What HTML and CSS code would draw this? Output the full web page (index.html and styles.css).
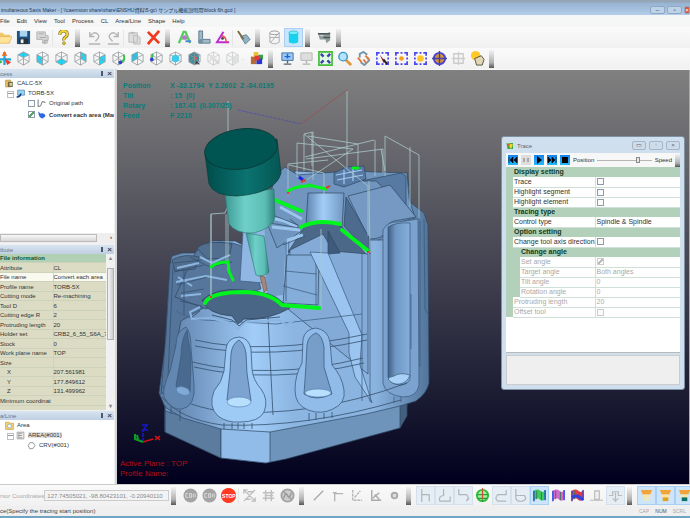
FILE: index.html
```html
<!DOCTYPE html>
<html lang="en">
<head>
<meta charset="utf-8">
<title>Simultaneous 5axis Maker</title>
<link rel="stylesheet" href="styles.css">
</head>
<body>
<svg class="defs" aria-hidden="true">
  <symbol id="cube" viewBox="0 0 16 16"><path d="M8 1l6 3v7.500l-6 3.500-6-3.500V4zM2 4l6 3 6-3M8 7v8M8 1v7l-6 3.500M8 8l6 3.500" fill="none" stroke="#92979b" stroke-width=".8"/></symbol>
  <symbol id="region" viewBox="0 0 16 16"><path d="M2 5V2h3M7 2h2M11 2h3v3M14 7v2M14 11v3h-3M9 14H7M5 14H2v-3M2 9V7" fill="none" stroke="#4a45ee" stroke-width="1.800"/></symbol>
  <symbol id="monitor" viewBox="0 0 16 16"><path d="M2 2h12v8H2z" fill="#9cc8f4" stroke="#3d6fa5"/><path d="M8 10v3M4 14h8" stroke="#567" stroke-width="1.500"/></symbol>
  <symbol id="disc" viewBox="0 0 16 16"><circle cx="8" cy="8" r="7.500" fill="#a4a4a4"/><path d="M3 6h2.500M3 6v4h2.500M7 6v4h2V6zM11 6v4M13 6v4" fill="none" stroke="#ddd" stroke-width="1"/></symbol>
  <symbol id="surface" viewBox="0 0 16 16"><path d="M2 3q4-3 7 0t5-1v10q-3 3-6 0t-6 2z" fill="currentColor"/><path d="M2 3v11M14 2v11" stroke="#2944d8" stroke-width="1.500"/><path d="M5 3v9M10 4v9" stroke="#3a7a50"/></symbol>
  <symbol id="bit" viewBox="0 0 16 16"><path d="M2 2h12l-2 5H4z" fill="#f2a33c"/><path d="M4 7h8v3H4z" fill="#ffe3a0"/><path d="M5 10h6v4H5z" fill="currentColor"/></symbol>
</svg>

<header class="titlebar">
  <h1>imultaneous 5axis Maker - [ \\caemsion share\share\ENSHU資料\5-gc\ サンプル機能説明用\block 6h.gcd ]</h1>
  <div class="winbuttons"><button aria-label="Minimize">–</button><button aria-label="Restore">▫</button><button class="close" aria-label="Close">×</button></div>
</header>

<nav class="menubar">
  <a href="#">File</a><a href="#">Edit</a><a href="#">View</a><a href="#">Tool</a><a href="#">Process</a><a href="#">CL</a><a href="#">Area/Line</a><a href="#">Shape</a><a href="#">Help</a>
</nav>

<div class="toolbar">
  <button aria-label="Open"><svg viewBox="0 0 16 16"><path d="M0 3h6l2 2h6v9H0z" fill="#f2c866"/><path d="M3 7h13l-3 7H0z" fill="#ffe39b" stroke="#dca944" stroke-width=".6"/></svg></button>
  <button aria-label="Save"><svg viewBox="0 0 16 16"><path d="M1 1h14v14H1z" fill="#1d5382"/><path d="M4 1h8v6H4z" fill="#a9d4f0"/><path d="M3 9h10v6H3z" fill="#26333e"/><path d="M5 10h3v4H5z" fill="#e8eef2"/></svg></button>
  <button aria-label="Print"><svg viewBox="0 0 16 16"><path d="M2 2h9v4h3v5h-3v3H8v-4H2z" fill="#d6d6d6" stroke="#b2b2b2"/><path d="M4 4h5M5 8h7M10 11h3v3h-3z" stroke="#aaa" fill="none"/></svg></button>
  <i class="sep"></i>
  <button aria-label="Help"><svg viewBox="0 0 16 16"><path d="M4 5q0-4 4-4t4 3.500q0 2-2 3.200T8.500 11" fill="none" stroke="#83702a" stroke-width="3.400"/><path d="M4 5q0-4 4-4t4 3.500q0 2-2 3.200T8.500 11" fill="none" stroke="#f3d436" stroke-width="2"/><circle cx="8.500" cy="14" r="1.600" fill="#e6c52c" stroke="#83702a" stroke-width=".6"/></svg></button>
  <i class="grip"></i>
  <button aria-label="Undo"><svg viewBox="0 0 16 16"><path d="M3 2v5h5M3 7q4-6 8-3t-2 8M2 15h12" fill="none" stroke="#b5b5b5" stroke-width="1.500"/></svg></button>
  <button aria-label="Redo"><svg viewBox="0 0 16 16"><path d="M13 2v5H8M13 7Q9 1 5 4t2 8M2 15h12" fill="none" stroke="#b5b5b5" stroke-width="1.500"/></svg></button>
  <i class="sep"></i>
  <button aria-label="Paste"><svg viewBox="0 0 16 16"><path d="M2 3h9v10H2zM7 6h5l2 2v7H7z" fill="#ddd" stroke="#bbb"/><path d="M4 2h4v2H4z" fill="#bbb"/></svg></button>
  <button aria-label="Delete"><svg viewBox="0 0 16 16"><path d="M2 2l12 12M14 1L2 15" stroke="#ef3a20" stroke-width="3"/></svg></button>
  <i class="grip"></i>
  <button aria-label="Area text"><svg viewBox="0 0 16 16"><path d="M2 14L7 2h2l5 12M4 9h8" fill="none" stroke="#53cf58" stroke-width="2.500"/><circle cx="8" cy="8" r="2.500" fill="#c070dc"/><path d="M9 12h6" stroke="#4a82e0" stroke-width="2"/></svg></button>
  <button aria-label="Measure"><svg viewBox="0 0 16 16"><path d="M3 1h4v9h8v4H3z" fill="#a4bac6" stroke="#5d7b8a"/><circle cx="5" cy="12" r="2.500" fill="#6f93a8"/></svg></button>
  <button aria-label="Angle"><svg viewBox="0 0 16 16"><path d="M9 2L2 13h13" fill="none" stroke="#c02cd0" stroke-width="2"/><path d="M7 6q5 1 5 7" fill="none" stroke="#e93f3f" stroke-width="1.500"/><circle cx="8" cy="9" r="1.500" fill="#444"/></svg></button>
  <i class="sep"></i>
  <button aria-label="Edit path"><svg viewBox="0 0 16 16"><path d="M5 7l6-2 4 5-5 5z" fill="#8fb3c8" stroke="#647f8d"/><path d="M2 1l6 9" stroke="#7b6b40" stroke-width="2"/></svg></button>
  <i class="grip"></i>
  <button aria-label="Wireframe"><svg viewBox="0 0 16 16"><ellipse cx="8" cy="3" rx="5" ry="2" fill="none" stroke="#999"/><path d="M3 3v10q5 3.500 10 0V3M3 8h10M4 13l8-9" fill="none" stroke="#aaa"/></svg></button>
  <button class="on" aria-label="Shaded"><svg viewBox="0 0 16 16"><path d="M3 3v10q5 3 10 0V3z" fill="#17d2ee"/><ellipse cx="8" cy="3" rx="5" ry="2" fill="#6ff0fb" stroke="#0da9c8" stroke-width=".6"/></svg></button>
  <i class="grip"></i>
  <button aria-label="Simulate"><svg viewBox="0 0 16 16"><path d="M1 3l8 1 5-2v9l-4 3-1-4H3z" fill="#8e9a9a"/><path d="M1 4h13M7 8h7" stroke="#4c5757" stroke-width="1.500"/><path d="M3 6h4" stroke="#dde"/></svg></button>
  <i class="grip"></i>
</div>

<div class="toolbar">
  <button aria-label="Rotate view"><svg viewBox="0 0 16 16"><path d="M8 1v14M1 9h14" stroke="#20a8e0" stroke-width="2.500"/><path d="M8 0l3 5H5z" fill="#f26a20"/><path d="M8 8l7 4-4 3z" fill="#e63c32"/><path d="M1 8l5 4-4 2z" fill="#35b74d"/></svg></button>
  <button aria-label="Top"><svg viewBox="0 0 16 16"><path d="M8 1l6 3-6 3-6-3z" fill="#25d4f2"/><use href="#cube"/></svg></button>
  <button aria-label="Front"><svg viewBox="0 0 16 16"><path d="M2 4l6 3v8l-6-3.500z" fill="#25d4f2"/><use href="#cube"/></svg></button>
  <button aria-label="Bottom"><svg viewBox="0 0 16 16"><path d="M8 8l6 3.500L8 15l-6-3.500z" fill="#25d4f2"/><use href="#cube"/></svg></button>
  <button aria-label="Back"><svg viewBox="0 0 16 16"><path d="M8 1l6 3v7.500L8 8z" fill="#25d4f2"/><use href="#cube"/></svg></button>
  <button aria-label="Right"><svg viewBox="0 0 16 16"><path d="M8 7l6-3v7.500L8 15z" fill="#25d4f2"/><use href="#cube"/></svg></button>
  <button aria-label="Isometric"><svg viewBox="0 0 16 16"><use href="#cube"/><path d="M14 4v5l-3 3" stroke="#35c34c" stroke-width="2" fill="none"/><circle cx="10" cy="12" r="2" fill="#3340d0"/></svg></button>
  <button aria-label="Left"><svg viewBox="0 0 16 16"><path d="M2 4l6-3v7l-6 3.500z" fill="#25c4e8"/><use href="#cube"/></svg></button>
  <button aria-label="Isometric left"><svg viewBox="0 0 16 16"><use href="#cube"/><path d="M4 3l-1 6" stroke="#35c34c" stroke-width="2"/><circle cx="3" cy="9" r="2" fill="#3340d0"/></svg></button>
  <button aria-label="Fit centre"><svg viewBox="0 0 16 16"><use href="#cube"/><circle cx="8" cy="8" r="4" fill="#3fc9ec"/></svg></button>
  <button aria-label="View by plane"><svg viewBox="0 0 16 16"><path d="M2 4l5-3 6 3v7l-5 4-6-3z" fill="#3f8f9c"/><path d="M7 4l5 4-4 2z" fill="#d84a40"/><path d="M10 11l4 3H9z" fill="#223"/><use href="#cube"/></svg></button>
  <button aria-label="Previous view"><svg viewBox="0 0 16 16" opacity=".5"><use href="#cube"/><circle cx="7" cy="7" r="3" fill="#ccc"/><path d="M9 9l5 5" stroke="#bbb" stroke-width="2"/></svg></button>
  <button aria-label="Next view"><svg viewBox="0 0 16 16" opacity=".5"><use href="#cube"/><path d="M8 5h6v8H8z" fill="#ccc"/></svg></button>
  <i class="sep wide">·</i>
  <button aria-label="Colours"><svg viewBox="0 0 16 16"><path d="M2 6h6v8H2z" fill="#b66a35"/><path d="M5 1h5v5H5z" fill="#e9c13d"/><path d="M10 4h5v5h-5z" fill="#38a04a"/><path d="M8 8h6v6H8z" fill="#2937d0"/><path d="M6 5h5v5H6z" fill="#e33838"/></svg></button>
  <i class="grip"></i>
  <button aria-label="Display"><svg viewBox="0 0 16 16"><use href="#monitor"/><path d="M8 3v5M5 6h6" stroke="#1667d4" stroke-width="1.500"/></svg></button>
  <button aria-label="Display off"><svg class="dim" viewBox="0 0 16 16"><use href="#monitor"/></svg></button>
  <button aria-label="Zoom all"><svg viewBox="0 0 16 16"><path d="M1 1h14v14H1z" fill="#e2fbe0" stroke="#43bd38" stroke-width="1.800"/><path d="M3 3l3 3M13 3l-3 3M3 13l3-3M13 13l-3-3" stroke="#3942ae" stroke-width="2.500"/></svg></button>
  <button aria-label="Zoom"><svg viewBox="0 0 16 16"><path d="M9 9l6 6" stroke="#df973c" stroke-width="3"/><circle cx="6.500" cy="6" r="4.500" fill="#b4e4fb" stroke="#3d93c5" stroke-width="1.500"/></svg></button>
  <button aria-label="Rotate"><svg viewBox="0 0 16 16"><path d="M4 7V3l4-2 4 3M12 7l2 3-5 5-4-3" fill="none" stroke="#7297ac" stroke-width="2"/><path d="M2 7l4 5M10 5l4 4M8 9l3 4" stroke="#e5763b" stroke-width="2"/></svg></button>
  <button aria-label="Pick region"><svg viewBox="0 0 16 16"><use href="#region"/><path d="M5 4l7 8-3 .5z" fill="#933"/><path d="M9 9l4 5" stroke="#222" stroke-width="2"/></svg></button>
  <button aria-label="Centre region"><svg viewBox="0 0 16 16"><use href="#region"/><circle cx="8" cy="8" r="2.500" fill="#f5a020"/></svg></button>
  <button aria-label="Highlight region"><svg viewBox="0 0 16 16"><use href="#region"/><circle cx="8" cy="8" r="3.500" fill="#ffc52a"/></svg></button>
  <button aria-label="Globe region"><svg viewBox="0 0 16 16"><circle cx="8" cy="8" r="6" fill="#d59335" stroke="#4a45d0" stroke-width="2"/><path d="M8 0v16M0 8h16" stroke="#4540a8" stroke-width="1.500"/></svg></button>
  <button aria-label="Reset"><svg viewBox="0 0 16 16"><path d="M8 1v14M1 8h14M3 3h10v10H3z" fill="none" stroke="#ccc" stroke-width="1.500"/></svg></button>
  <button aria-label="Grab"><svg viewBox="0 0 16 16"><circle cx="6" cy="5" r="5" fill="#ffc928"/><path d="M5 8l7-3 3 4-2 6H7z" fill="#e3d7b8" stroke="#55503f"/></svg></button>
  <i class="grip"></i>
</div>

<main>
  <aside>
    <section class="panel tree-panel">
      <h2><span>cess</span><b class="pin"></b><b class="x">×</b></h2>
      <ul class="tree">
        <li><svg viewBox="0 0 16 16"><path d="M1 2h9v12H1z" fill="#e9c263" stroke="#a67f2c"/><path d="M5 5h9v9H5z" fill="#6b6548"/><path d="M8 7h5v5H8z" fill="#d6cf9c"/></svg>CALC-5X
          <ul>
            <li class="node"><svg viewBox="0 0 16 16"><path d="M3 2h12v9H3z" fill="#9ad4f1" stroke="#2d6a9c"/><path d="M1 14q6 1 8-6" fill="none" stroke="#17407a" stroke-width="2.500"/></svg>TORB-5X
              <ul class="leaves">
                <li><label><input type="checkbox"><svg viewBox="0 0 16 16"><path d="M2 1v13M2 13q5 1 6-5t7-1" fill="none" stroke="#8a8a8a" stroke-width="2"/></svg>Original path</label></li>
                <li class="current"><label><input type="checkbox" checked><svg viewBox="0 0 16 16"><path d="M2 2l4 4q8-2 9 5l-5 4q-6-1-7-7z" fill="#2f67e0"/></svg>Convert each area (Mar</label></li>
              </ul></li>
          </ul></li>
      </ul>
      <div class="hscroll"><i></i><b>›</b></div>
    </section>

    <section class="panel attr-panel">
      <h2><span>ibute</span><b class="pin"></b><b class="x">×</b></h2>
      <div class="attr-body">
        <div class="attr-scroll">
          <table class="attrs">
            <tr class="head"><th colspan="2">File information</th></tr>
            <tr><th>Attribute</th><td>CL</td></tr>
            <tr class="sel"><th>File name</th><td>Convert each area</td></tr>
            <tr><th>Profile name</th><td>TORB-5X</td></tr>
            <tr><th>Cutting mode</th><td>Re-machining</td></tr>
            <tr><th>Tool D</th><td>6</td></tr>
            <tr><th>Cutting edge R</th><td>2</td></tr>
            <tr><th>Protruding length</th><td>20</td></tr>
            <tr><th>Holder set</th><td>CRB2_6_55_S6A_75</td></tr>
            <tr><th>Stock</th><td>0</td></tr>
            <tr><th>Work plane name</th><td>TOP</td></tr>
            <tr><th>Size</th><td></td></tr>
            <tr class="sub"><th>X</th><td>207.561981</td></tr>
            <tr class="sub"><th>Y</th><td>177.849612</td></tr>
            <tr class="sub"><th>Z</th><td>131.499962</td></tr>
            <tr><th colspan="2">Minimum coordinat</th></tr>
          </table>
        </div>
        <div class="vscroll"><b>▴</b><i></i><b>▾</b></div>
      </div>
    </section>

    <section class="panel area-panel">
      <h2><span>a/Line</span><b class="pin"></b><b class="x">×</b></h2>
      <ul class="tree">
        <li><svg viewBox="0 0 16 16"><path d="M1 2h6l2 2h6v11H1z" fill="#f3cf72" stroke="#c1932f"/><circle cx="8" cy="9" r="3.500" fill="#fff" stroke="#5b9ec0"/></svg>Area
          <ul>
            <li class="node picked"><svg viewBox="0 0 16 16"><path d="M2 2h12v12H2z" fill="#eee" stroke="#777"/><path d="M5 4h6M5 8h6M5 12h6M5 4v8" stroke="#666"/></svg><span>AREA(#001)</span>
              <ul><li><svg viewBox="0 0 16 16"><path d="M5 3h6l3 5-3 5-6 1-3-6z" fill="#fff" stroke="#888" stroke-width="1.500"/></svg>CRV(#001)</li></ul></li>
          </ul></li>
      </ul>
    </section>
  </aside>

  <section class="viewport">
    <svg class="scene" viewBox="117 69 572 414" preserveAspectRatio="xMinYMin meet">
      <defs>
        <linearGradient id="body"><stop offset="0" stop-color="#5b7ca3"/><stop offset=".14" stop-color="#7398c3"/><stop offset=".35" stop-color="#a1cdf8"/><stop offset=".5" stop-color="#8cb5e2"/><stop offset=".8" stop-color="#8ab3df"/><stop offset="1" stop-color="#52749a"/></linearGradient>
        <linearGradient id="slot"><stop offset="0" stop-color="#3f5f86"/><stop offset=".35" stop-color="#6f97c4"/><stop offset="1" stop-color="#86afdc"/></linearGradient>
        <linearGradient id="cyl"><stop offset="0" stop-color="#5f84b0"/><stop offset=".45" stop-color="#a3cdf8"/><stop offset="1" stop-color="#7097c2"/></linearGradient>
        <linearGradient id="tank"><stop offset="0" stop-color="#004c4a"/><stop offset=".55" stop-color="#0b7370"/><stop offset="1" stop-color="#045653"/></linearGradient>
        <linearGradient id="shank"><stop offset="0" stop-color="#3d9993"/><stop offset=".4" stop-color="#6fd0c9"/><stop offset=".8" stop-color="#5cbdb5"/><stop offset="1" stop-color="#2f827c"/></linearGradient>
      </defs>

      <path d="M238 109l63 14" fill="none" stroke="#4b4bb0" stroke-width=".8" stroke-dasharray="3 1"/>
      <path d="M301 123l46-34" fill="none" stroke="#a04545" stroke-width=".8" stroke-dasharray="3 1"/>

      <g stroke="#2e4763" stroke-width=".7" stroke-linejoin="round">
        <path d="M165 405l0 26 56 26 45 5 20-4 114-31 7-22 0-20z" fill="#6f94bc"/>
        <path d="M165 410v21l56 26v-31z" fill="#5b7b9f"/>
        <path d="M221 425v32l45 5 4-1v-34z" fill="#91bbe8"/>
        <path d="M400 401v26l7-12v-18z" fill="#43607f"/>
        <path d="M170 262l2-7 10-3h15l3-7 13-5h22l40 20 20-90 98 5 14-3 4 30 13 10 4 12 1 158q-2 10-13 18l-16 5-34 8-96 18-49-3-38-11-18-11-6-14 6-46z" fill="url(#body)"/>
        <path d="M170 262q10-8 30-6l5 50-24 14-14 70-6 3 5-60z" fill="#54749a"/>
        <path d="M195 252q8-14 38-10l18 6 10 40-55 20-31-12z" fill="#56769b"/>
        <path d="M172 259q12-7 27-3l-4 12-20 2z" fill="#526e8f"/>
        <path d="M197 247q10-9 35-4l-3 14-22 1z" fill="#526e8f"/>
      </g>

      <g fill="none" stroke="#8db6e0" stroke-width="2">
        <path d="M177 267l22-5M176 281l30-6 21 4M181 295l20-2M200 256l12 6 18-8M178 276l14 9"/>
      </g>
      <g fill="none" stroke="#304d6c" stroke-width=".7">
        <path d="M174 262l28-3M174 271l30-7M177 284l30-8M181 292l23-4M180 300l22 5M190 256l20 10 22-5M184 268v46M173 266l-5 110"/>
      </g>

      <path d="M243 230l32-18 14 16-1 56-48-4z" fill="#90b7e3" stroke="#3f5f83" stroke-width=".7"/>
      <path d="M264 212h23l-4 82-16 2z" fill="#769cc8"/>

      <g stroke="#2e4763" stroke-width=".7">
        <path d="M275 175l10-9 13 8 50-4 59 2 2 25 6 20-15 4-8 18h-26l-60-12-29 20-12-30z" fill="#7095bf"/>
        <path d="M361 180l40-8 5 3v31l-14-11-16-15z" fill="#577aa3"/>
        <path d="M348 195l42-11 26 32-22 4q-9 3-9 11-2 7-16 7z" fill="#7599c3"/>
        <path d="M308 192h36l-2 34q-16 5-36-2z" fill="url(#cyl)"/>
        <path d="M306 224q18-8 36 2l24 27-78-2z" fill="#4c6888"/>
        <path d="M346 196l23 40 1 17-26-28z" fill="#4d6b8f"/>
        <path d="M290 249l33-16 10 17 35 3v120l-80-65z" fill="#84abd7"/>
        <path d="M287 254l32 0-1 50-35-2z" fill="#85add9"/>
        <path d="M328 230l12 22-12 1z" fill="#3f5b7b"/>
        <path d="M334 172l12-6 18-1 2 13-22 8-10-3z" fill="#567aa3"/>
      </g>
      <path d="M336 174l26-5M337 179l26-5M344 169v14M353 168v12" stroke="#a3caf2" stroke-width="1.200"/>
      <path d="M268 216l16 4 13 6M272 226l28 3M285 240l18-6M280 206l22 12" stroke="#9dc6ef" stroke-width="3" fill="none"/>
      <path d="M270 213l28 11M270 222l30 5M283 244l22-9M286 238v62M290 218l10 8" stroke="#304d6c" stroke-width=".7" fill="none"/>

      <g stroke="#3a5879" stroke-width=".7" fill="none">
        <path d="M285 270l32 3M283 285l34 9M316 253v51"/>
        <path d="M310 251l18 1 34 82-2 30 12 38-17-26-6-24v-20z" fill="#9bc5f0"/>
        <path d="M362 252l0 148M370 238v163M378 239q6-2 7-10"/>
        <path d="M383 229q5-9 15-8l20-3 1 166q-2 12-16 12-18-2-20-14z" fill="#7ca3cf"/>
        <path d="M388 226q8-5 22-4v156q-2 6-11 6-10-2-11-8z" fill="url(#slot)"/>
        <path d="M388 378q4 6 12 5 8-2 10-9-10-3-16 1-5 1-6 3z" fill="#a9d1f8"/>
        <path d="M420 220v146M424 218l1 90 3 5M394 396v6M401 396v5M411 293v55"/>
      </g>

      <path d="M176 310q12 8 28 9l72 4 86-10" fill="none" stroke="#456589" stroke-width=".8"/>
      <g fill="none" stroke="#34506f" stroke-width=".8">
        <path d="M195 339q70 16 172-6M195 345q75 15 172-6M192 361q78 19 171-4M194 366q78 18 170-4M163 385q14 18 57 25 90 8 187-28M162 396q17 22 60 28 85 3 179-25M268 316l5 98"/>
        <path d="M165 404l0 26M180 409v11M171 405v8M224 422v6M232 422v6M238 422v6M244 422v6M252 422v6M309 412v8M316 412v7M324 412v6M332 411v6"/>
      </g>

      <path d="M202 299q14-13 42-10 30 2 38 12l8 6q-20 12-46 11l-6 5-6-8q-25-2-30-16z" fill="#4a6686" stroke="#2d455f" stroke-width=".8"/>
      <path d="M200 306l-10 5 2 7 18-1 20 5 8 6 7-7 34-2 7 5 10-6" fill="none" stroke="#8bb5e2" stroke-width="2"/>
      <path d="M200 310l-8 6M212 314l20 5 7 6 7-6 34-3" fill="none" stroke="#2d455f" stroke-width=".8"/>

      <g stroke="#3d5c80" stroke-width=".8">
        <path d="M239 336q-12 1-13 12l-2 22q-2 11-10 20-6 16 4 25 9 7 22 6 19 0 24-10 5-12-3-23-8-9-9-20l-1-20q-2-11-12-12z" fill="#9ecaf6"/>
        <path d="M239 339q-7 4-8 14l-1 18-3 28q11 8 24 1l-4-28-1-20q-2-10-7-13z" fill="#7da4d0"/>
        <path d="M316 327q-11 1-13 11l-1 24q-7 12-7 27 0 15 13 20 13 5 25-1 13-6 11-19-2-14-12-25l-2-23q-2-12-14-14z" fill="#91bbe8"/>
        <path d="M316 332q-8 3-9 12l-1 20-2 29q12 8 28 0l-8-27v-20q-2-12-8-14z" fill="#779ec9"/>
        <path d="M186 326q-10 4-10 18l-6 26q-8 18-6 26 8 14 18 12 14-3 12-25l-3-36q0-16-5-21z" fill="#6287b1"/>
        <path d="M187 329q-6 10-6 26l-5 30q5 8 14 6l1-34z" fill="#49698e"/>
      </g>
      <g fill="#b9dfff" stroke="#537ba8" stroke-width=".6"><ellipse cx="239" cy="401" rx="12" ry="5"/><ellipse cx="318" cy="392" rx="13" ry="4"/><ellipse cx="183" cy="390" rx="7" ry="4" transform="rotate(18 183 390)" fill="#82aad6"/></g>

      <g fill="none" stroke="#a9c9c9" stroke-width=".8">
        <path d="M347 90v77M228 100v170M211 294v-81l14-1 4-10M211 213v84M226 213v50M288 194v-31l40-4M297 176v-34l56 6-48 32M304 170v-37l9-2v48M304 133l64 52v50M308 135l50 8v22M312 131v34M306 158l77-10v24M375 139v36M305 156l69-17M289 164l35 8v24M381 148l4 22M385 175v-40l34 19v63M410 146v60M369 180l1 72M321 228v80"/>
      </g>
      <g fill="none" stroke="#00f51d" stroke-width="4" stroke-linecap="round">
        <path d="M205 302q5-11 40-11 26 1 37 13l37 3M275 199l26 11M301 226q16-8 39-3M342 229l25 20"/>
        <path d="M288 190q8-5 20-5M211 266q6-5 17-5l1 9 4 9M308 184l18 4M353 167h5" stroke-width="3"/>
      </g>
      <path d="M299 176l4 3" stroke="#2222d8" stroke-width="3"/><path d="M301 181l5-2M210 296h2M264 289h2M367 251h2M326 187l4-2M287 192h2" stroke="#e03b2d" stroke-width="2"/>

      <path d="M246 232l18 3 5 36q-7 6-13 3z" fill="url(#shank)" stroke="#2a756f" stroke-width=".6"/>
      <path d="M260 275l5 1 2 13-3 2z" fill="#a68779" stroke="#665045" stroke-width=".6"/>
      <path d="M225 193l49-5 1 28q-2 11-21 16-18 1-25-9z" fill="url(#shank)" stroke="#2a756f" stroke-width=".6"/>
      <path d="M205 153l4 30q5 12 28 12 39-3 44-23l-4-34z" fill="url(#tank)" stroke="#083d3b" stroke-width=".7"/>
      <ellipse cx="241" cy="148" rx="36.500" ry="20" fill="#005552" stroke="#0b3c3a" transform="rotate(-8 241 148)"/>

      <g fill="none" stroke-width="1.500">
        <path d="M143 441v-12" stroke="#1717d0" stroke-dasharray="4 1"/><path d="M142 424h5l-4 5h5" stroke="#1717d0"/>
        <path d="M143 441l10-3" stroke="#cf1111"/><path d="M155 435l5 4M160 435l-5 4" stroke="#e01212"/>
        <path d="M143 441l-8-3v-5M137 434l1 4" stroke="#0c9d26" stroke-width="2"/>
      </g>
    </svg>

    <dl class="readout">
      <dt>Position</dt><dd>X -33.1794 &nbsp;Y 2.2602 &nbsp;Z -84.0195</dd>
      <dt>Tilt</dt><dd>: 15 &nbsp;(0)</dd>
      <dt>Rotary</dt><dd>: 167.43 &nbsp;(0.307/25)</dd>
      <dt>Feed</dt><dd>F 2210</dd>
    </dl>
    <p class="plane">Active Plane : TOP<br>Profile Name:</p>

    <div class="dialog" role="dialog" aria-labelledby="trace-title">
      <header>
        <svg viewBox="0 0 16 16"><path d="M1 2h13v12H3z" fill="#37a948"/><path d="M2 2l12 3-4 9z" fill="#f3d52f"/><path d="M3 3l5 2-2 4z" fill="#e8452e"/></svg>
        <h2 id="trace-title">Trace</h2>
        <button aria-label="Minimize">▭</button><button aria-label="Maximize">◦</button><button aria-label="Close">×</button>
      </header>
      <div class="player">
        <button aria-label="First"><svg viewBox="0 0 10 10"><path d="M1 2v6M5 2v6L2 5zM9 2v6L6 5z" stroke="#012" stroke-width=".8"/></svg></button>
        <button aria-label="Pause" disabled><svg viewBox="0 0 10 10"><path d="M3 3v4M7 3v4" stroke="#aaa" stroke-width="2"/></svg></button>
        <button aria-label="Play"><svg viewBox="0 0 10 10"><path d="M3 1l5 4-5 4z"/></svg></button>
        <button aria-label="Last"><svg viewBox="0 0 10 10"><path d="M9 2v6M1 2v6l3-3zM5 2v6l3-3z" stroke="#012" stroke-width=".8"/></svg></button>
        <button aria-label="Stop"><svg viewBox="0 0 10 10"><path d="M2 2h6v6H2z"/></svg></button>
        <label for="pos">Position</label><input id="pos" type="range" min="0" max="100" value="77"><span>Speed</span><i class="grip"></i>
      </div>
      <table class="settings">
        <colgroup><col class="g"><col class="g"><col class="n"><col></colgroup>
        <tr class="head"><th></th><th colspan="3">Display setting</th></tr>
        <tr><th></th><td colspan="2"><label for="s1">Trace</label></td><td><input id="s1" type="checkbox"></td></tr>
        <tr><th></th><td colspan="2"><label for="s2">Highlight segment</label></td><td><input id="s2" type="checkbox"></td></tr>
        <tr><th></th><td colspan="2"><label for="s3">Highlight element</label></td><td><input id="s3" type="checkbox"></td></tr>
        <tr class="head"><th></th><th colspan="3">Tracing type</th></tr>
        <tr><th></th><td colspan="2">Control type</td><td>Spindle &amp; Spindle</td></tr>
        <tr class="head"><th></th><th colspan="3">Option setting</th></tr>
        <tr><th></th><td colspan="2"><label for="s4">Change tool axis direction</label></td><td><input id="s4" type="checkbox"></td></tr>
        <tr class="head"><th></th><th></th><th colspan="2">Change angle</th></tr>
        <tr class="off"><th></th><th></th><td><label for="s5">Set angle</label></td><td><input id="s5" type="checkbox" checked disabled></td></tr>
        <tr class="off"><th></th><th></th><td>Target angle</td><td>Both angles</td></tr>
        <tr class="off"><th></th><th></th><td>Tilt angle</td><td>0</td></tr>
        <tr class="off"><th></th><th></th><td>Rotation angle</td><td>0</td></tr>
        <tr class="off"><th></th><td colspan="2">Protruding length</td><td>20</td></tr>
        <tr class="off"><th></th><td colspan="2"><label for="s6">Offset tool</label></td><td><input id="s6" type="checkbox" disabled></td></tr>
      </table>
      <div class="blank"></div>
      <div class="hint"></div>
    </div>
  </section>
</main>

<div class="toolbar bottom">
  <label class="coord-label" for="coords">rsor Coordinates</label>
  <select id="coords"><option>127.74505021, -98.80423101, -0.20940110</option></select>
  <i class="grip"></i>
  <button aria-label="Go"><svg viewBox="0 0 16 16"><use href="#disc"/></svg></button>
  <button aria-label="Skip"><svg viewBox="0 0 16 16"><use href="#disc"/></svg></button>
  <button class="stop">STOP</button>
  <i class="sep"></i>
  <button aria-label="Break"><svg viewBox="0 0 16 16"><path d="M2 2l12 12M14 2L2 14M2 6V2h4M10 14h4v-4M6 4h7M3 12h6" fill="none" stroke="#bdbdbd" stroke-width="1.500"/></svg></button>
  <button aria-label="Split"><svg viewBox="0 0 16 16"><path d="M5 2v12M11 2v12M2 5h12M2 11h12M4 8h9" fill="none" stroke="#bfbfbf" stroke-width="1.500"/></svg></button>
  <button aria-label="Cancel"><svg viewBox="0 0 16 16"><circle cx="8" cy="8" r="6.500" fill="#ccc" stroke="#a4a4a4" stroke-width="2"/><path d="M4 11q2-8 4-3t4-3M4 4l8 8" fill="none" stroke="#999" stroke-width="1.500"/></svg></button>
  <i class="grip"></i>
  <button aria-label="Line"><svg viewBox="0 0 16 16"><path d="M3 13L13 3" stroke="#aaa" stroke-width="1.500"/></svg></button>
  <button aria-label="Corner"><svg viewBox="0 0 16 16"><path d="M5 14V5M5 6h9M3 5h4" fill="none" stroke="#b5b5b5" stroke-width="1.500"/></svg></button>
  <button aria-label="Trim"><svg viewBox="0 0 16 16"><path d="M4 2v11h10M6 10l6-7" fill="none" stroke="#b5b5b5" stroke-width="1.500" stroke-dasharray="3 1"/></svg></button>
  <button aria-label="Extend"><svg viewBox="0 0 16 16"><path d="M4 2v11h10M5 11l7-6M7 7l5 5" fill="none" stroke="#aaa" stroke-width="1.500"/></svg></button>
  <button aria-label="Point"><svg viewBox="0 0 16 16"><circle cx="8" cy="8" r="3" fill="#ddd" stroke="#aaa" stroke-width="2"/></svg></button>
  <i class="grip"></i>
  <button class="soft" aria-label="Lead in"><svg viewBox="0 0 16 16"><path d="M4 1v14M4 7h8v7" fill="none" stroke="#b0b6bb" stroke-width="1.300"/></svg></button>
  <button class="soft" aria-label="Lead out"><svg viewBox="0 0 16 16"><path d="M7 1v7q-6 1-4 6h11V9" fill="none" stroke="#b0b6bb" stroke-width="1.300"/></svg></button>
  <button class="soft" aria-label="Link"><svg viewBox="0 0 16 16"><path d="M3 1v6h8q4 3 0 7l3-3" fill="none" stroke="#b0b6bb" stroke-width="1.300"/></svg></button>
  <button aria-label="Globe"><svg viewBox="0 0 16 16"><circle cx="8" cy="8" r="6" fill="#a9efa4" stroke="#2fbf38" stroke-width="2"/><path d="M2 7h12M3 11h10M8 2v13" stroke="#2b9f3e" stroke-width="1.300"/><path d="M8 0v12" stroke="#df4a3a"/></svg></button>
  <button class="soft" aria-label="Curve"><svg viewBox="0 0 16 16"><path d="M13 2v5H4q-4 4 0 7h9" fill="none" stroke="#b0b6bb" stroke-width="1.300"/></svg></button>
  <button class="soft" aria-label="Loop"><svg viewBox="0 0 16 16"><path d="M3 1v7h9q4 4-2 6-8 1-7-6" fill="none" stroke="#b0b6bb" stroke-width="1.300"/></svg></button>
  <button class="on green" aria-label="Surface"><svg viewBox="0 0 16 16"><use href="#surface"/></svg></button>
  <button class="pink" aria-label="Surface pair"><svg viewBox="0 0 16 16"><use href="#surface"/></svg></button>
  <button class="red" aria-label="Surface stack"><svg viewBox="0 0 16 16"><use href="#surface"/><path d="M2 10q6-4 12 3" fill="none" stroke="#3142e0" stroke-width="3"/></svg></button>
  <button aria-label="Boss"><svg viewBox="0 0 16 16"><path d="M6 3h5v9H6zM1 13h14" fill="#eee" stroke="#bbb" stroke-width="1.200"/></svg></button>
  <button class="soft" aria-label="Plunge"><svg viewBox="0 0 16 16"><path d="M1 8h4V4h6v4h4M8 5v9l-3-3M8 14l3-3" fill="none" stroke="#bbb" stroke-width="1.300"/></svg></button>
  <i class="grip"></i>
  <button class="on pale" aria-label="Tool view"><svg viewBox="0 0 16 16"><use href="#bit"/></svg></button>
  <button class="on amber" aria-label="Holder view"><svg viewBox="0 0 16 16"><use href="#bit"/></svg></button>
  <button class="on teal" aria-label="Cutter view"><svg viewBox="0 0 16 16"><use href="#bit"/></svg></button>
</div>

<footer><p>ce(Specify the tracing start position)</p><span>CAP</span><span class="lit">NUM</span><span>SCRL</span></footer>
</body>
</html>
```
FILE: styles.css
```css
* { box-sizing: border-box; }
body {
  margin: 0;
  height: 100vh;
  overflow: hidden;
  display: flex;
  flex-direction: column;
  background: #f5f6f6;
  border-bottom: 2px solid #6fa5c2;
  font: 6px/8px "Liberation Sans", "Noto Sans CJK JP", sans-serif;
  color: #333;
}
h1, h2, p, ul, dl, dd { margin: 0; padding: 0; font: inherit; }
ul { list-style: none; }
button { border: 0; padding: 0; background: none; font: inherit; color: inherit; }
.defs { position: absolute; width: 0; height: 0; }

.titlebar {
  display: flex;
  flex: 0 0 15px;
  align-items: center;
  padding-top: 4px;
  background: linear-gradient(#94a6b6 2px, #97b3d2 3px, #b3cdea);
  color: #24384f;
}
.titlebar h1 { flex: 1; padding-left: 1px; font-size: 5px; white-space: nowrap; }
.winbuttons { display: flex; gap: 2px; }
.winbuttons button { width: 15px; height: 8px; line-height: 7px; border: 1px solid #8fa8c3; border-radius: 2px; background: #bed2e8; }
.winbuttons .close { width: 6px; background: #d6593f; color: #fff; }

.menubar { display: flex; flex: 0 0 12px; align-items: center; gap: 7px; }
.menubar a { color: #333; text-decoration: none; }

.toolbar { display: flex; flex: 0 0 21px; align-items: center; background: linear-gradient(#fafafa, #f1f1f1); }
.toolbar > button { flex: 0 0 19px; height: 19px; display: flex; align-items: center; justify-content: center; }
.toolbar > button:first-child { margin-left: -5px; }
.toolbar svg { width: 15px; height: 15px; }
.dim { filter: grayscale(1); opacity: .45; }
.sep { flex: 0 0 2px; height: 16px; border-left: 1px solid #e6e6e6; }
.sep.wide { flex-basis: 5px; border: 0; color: #888; line-height: 16px; }
.grip { flex: 0 0 5px; height: 18px; margin: 0 5px 0 2px; background: linear-gradient(#f2f2f2, #b0b0b0 70%, #555); }
.toolbar > .on { background: #cde5fb; border: 1px solid #a9cff2; }
.toolbar > .soft { background: #e5edf5; border: 1px solid #d4e0ec; }

main { display: flex; flex: 1; min-height: 0; }
aside { flex: 0 0 117px; min-width: 0; overflow: hidden; display: flex; flex-direction: column; border-right: 2px solid #d5d5d5; background: #f0f0f0; }
.panel { display: flex; flex-direction: column; min-height: 0; margin-right: 1px; background: #fff; }
.panel h2 { display: flex; flex: 0 0 9px; gap: 4px; align-items: center; padding-right: 2px; background: linear-gradient(#d8e4f0, #bfd0e2); color: #68788a; overflow: hidden; }
.panel h2 span { flex: 1; }
.pin { width: 2px; height: 5px; background: #4a5a70; }
.x { font-size: 8px; color: #3a4a60; }
.tree-panel { flex: 0 0 174px; }
.tree-panel .tree { flex: 1; overflow: hidden; }
.tree { padding: 0 0 0 5px; white-space: nowrap; line-height: 10px; }
.tree ul { padding-left: 11px; }
.tree .leaves { padding-left: 12px; }
.tree svg { width: 9px; height: 9px; margin-right: 3px; vertical-align: middle; }
.tree label { display: inline-flex; align-items: center; }
.node { position: relative; }
.node::before { content: ""; position: absolute; left: -9px; top: 3px; width: 5px; height: 5px; border: 1px solid #b9c0c8; background: linear-gradient(#fff 1px, #999 1px 2px, #fff 2px); }
.current { font-weight: bold; }
.picked > span { background: #e3e3e3; }
input[type="checkbox"] { appearance: none; flex: none; width: 7px; height: 7px; margin: 0 2px 0 0; border: 1px solid #8d9ba8; background: #fbfbfb; vertical-align: middle; }
input[type="checkbox"]:checked { background: linear-gradient(135deg, #fff 35%, #5aa860 40% 65%, #fff 70%); }
input[type="checkbox"]:disabled { border-color: #ccc; }
input[type="checkbox"]:disabled:checked { background: linear-gradient(135deg, #fff 35%, #bbb 40% 65%, #fff 70%); }
.hscroll { display: flex; flex: 0 0 10px; justify-content: space-between; background: #eee; padding-right: 2px; }
.hscroll i { width: 97px; height: 8px; margin-top: 1px; border: 1px solid #bbb; background: linear-gradient(#f7f7f7, #d8d8d8); }

.attr-panel { flex: 0 0 165px; margin-top: 2px; }
.attr-body { display: flex; flex: 1; min-height: 0; }
.attr-scroll { flex: 1; min-width: 0; overflow: hidden; background: #dcdcc4; }
.attrs { width: 100%; height: 152px; table-layout: fixed; border-collapse: collapse; white-space: nowrap; }
.attrs th, .attrs td { padding: 0; border-bottom: 1px solid #cdd2bb; font-weight: normal; text-align: left; line-height: 8px; }
.attrs td { border-left: 1px solid #cdd2bb; }
.attrs .head th { background: #b1d0b4; font-weight: bold; color: #153; }
.attrs .sel { background: #faf9f0; }
.attrs .sub th { padding-left: 7px; }
.vscroll { display: flex; flex: 0 0 8px; flex-direction: column; justify-content: space-between; align-items: center; background: #f1f1f1; color: #888; }
.vscroll i { width: 7px; height: 72px; margin: 0 0 57px; border: 1px solid #b0b0b0; background: linear-gradient(90deg, #f5f5f5, #ccc); }
.area-panel { flex: 1; margin-top: 1px; }

.viewport { position: relative; flex: 1; min-width: 0; margin-top: 1px; border-right: 1px solid #aaa; overflow: hidden; background: linear-gradient(#808080, #00001e); }
.scene { display: block; width: 100%; height: 100%; }
.readout { position: absolute; left: 6px; top: 11px; display: grid; grid-template-columns: 47px auto; font-size: 7px; font-weight: bold; line-height: 10px; color: #087d78; white-space: nowrap; }
.plane { position: absolute; left: 3px; bottom: 5px; font-size: 8px; line-height: 10px; color: #b30d16; }

.dialog { position: absolute; right: 4px; top: 66px; width: 184px; height: 254px; display: flex; flex-direction: column; padding: 1px 4px 4px; border: 1px solid #7f90a2; border-radius: 3px; background: #d0dfed; font-size: 7px; }
.dialog header { display: flex; flex: 0 0 15px; align-items: center; gap: 3px; color: #667; }
.dialog header svg { width: 8px; height: 8px; }
.dialog h2 { flex: 1; font-size: 6px; }
.dialog header button { width: 14px; height: 9px; line-height: 7px; border: 1px solid #a5b6c8; border-radius: 2px; background: #cedbe9; font-size: 6px; }
.player { display: flex; flex: 0 0 14px; align-items: center; gap: 3px; padding-left: 2px; background: #f7f7f7; font-size: 6px; }
.player button { flex: 0 0 10px; height: 10px; background: linear-gradient(#1682ee, #25baf8); }
.player button:disabled { background: #ddd; }
.player button svg { display: block; width: 10px; height: 10px; }
.player input { appearance: none; flex: 1; min-width: 0; height: 1px; margin: 0; background: #b5b5b5; }
.player input::-webkit-slider-thumb { appearance: none; width: 4px; height: 6px; border: 1px solid #8a8a8a; background: #e5e5e5; }
.player .grip { height: 13px; margin: 0; }
.settings { width: 100%; table-layout: fixed; border-collapse: collapse; background: #fff; white-space: nowrap; }
.settings .g { width: 7px; }
.settings .n { width: 75px; }
.settings th, .settings td { height: 10px; padding: 0 0 0 1px; line-height: 8px; text-align: left; font-weight: normal; }
.settings td { border-bottom: 1px solid #cfe1d6; }
.settings td + td { border-left: 1px solid #cfe1d6; }
.settings th { background: #b3d1ba; }
.settings .head th { font-weight: bold; color: #123a20; }
.off { color: #aaa9a6; }
.blank { flex: 1; background: #fff; border-bottom: 1px solid #b9b9b9; }
.hint { flex: 0 0 30px; margin-top: 2px; background: #efefef; border: 1px solid #ccc; }

.bottom { flex-basis: 22px; border-top: 1px solid #ccc; }
.coord-label { flex: 0 0 44px; color: #aaa; white-space: nowrap; }
.bottom select { appearance: none; flex: 0 0 125px; height: 11px; padding: 0 2px; border: 1px solid #ccc; border-radius: 0; background: #f3f3f3; font: inherit; color: #8a8a8a; }
.toolbar > .stop { border-radius: 50%; background: radial-gradient(circle, #ff3a20 7px, transparent 8px); color: #fff; font-size: 5px; font-weight: bold; }
.green { color: #3ecb5c; }
.pink { color: #d568cf; }
.red { color: #e23c4b; }
.pale { color: #e9e9c4; }
.amber { color: #e2a116; }
.teal { color: #0a7268; }

footer { display: flex; flex: 0 0 10px; align-items: center; gap: 6px; padding-right: 4px; background: #efefef; }
footer p { flex: 1; color: #444; }
footer span { color: #aaa; font-size: 5px; }
footer .lit { color: #555; }
```
